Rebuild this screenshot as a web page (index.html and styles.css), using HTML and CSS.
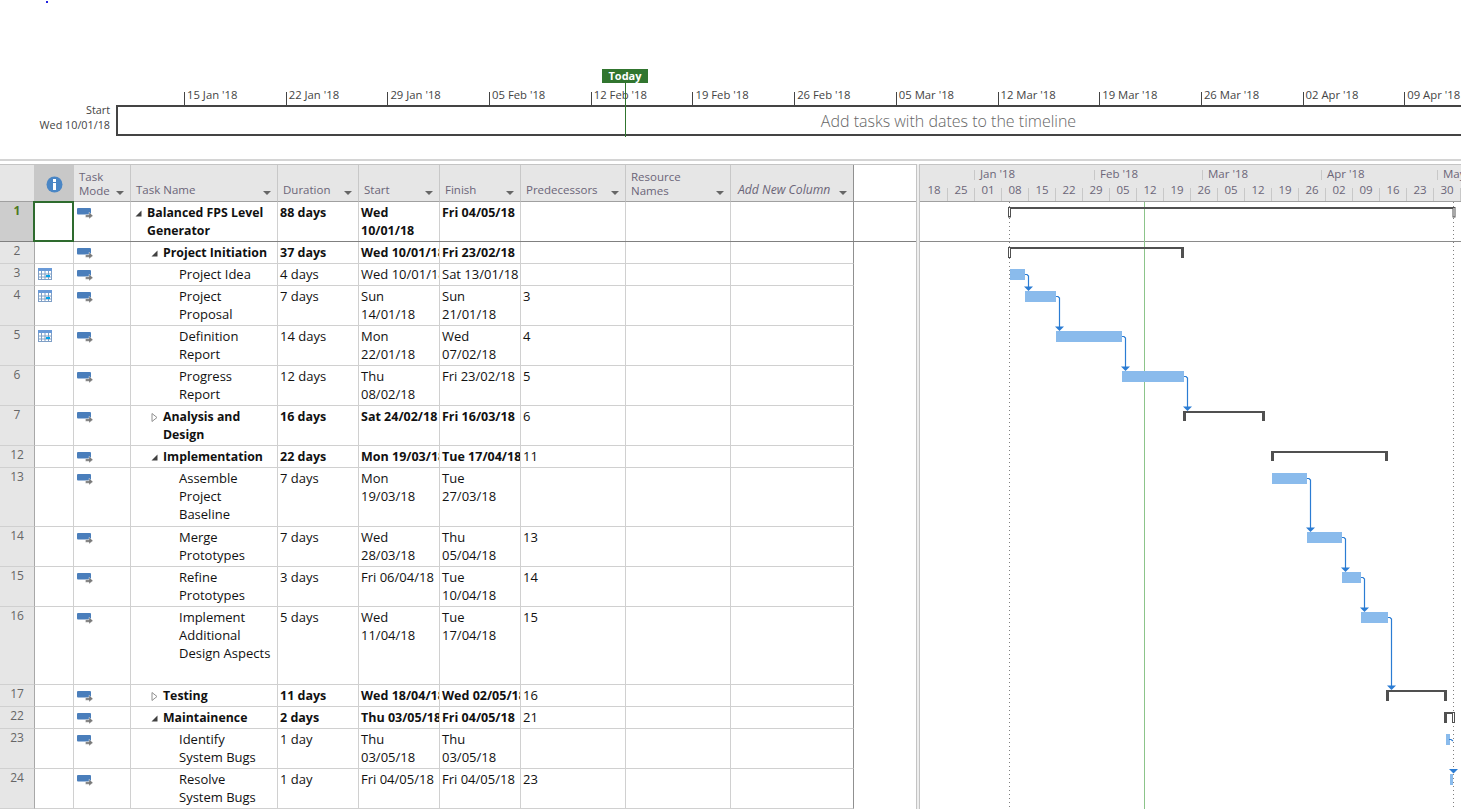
FILE: index.html
```html
<!DOCTYPE html>
<html>
<head>
  <meta charset="UTF-8" />
  <title>Balanced FPS Level Generator</title>
  <link rel="stylesheet" href="styles.css">
</head>
<body>
  <svg class="defs" width="0" height="0">
    <symbol id="mode" viewBox="0 0 16 11">
      <rect x="0" y="0" width="14" height="6.500" rx="1" fill="#4a7ebb"/>
      <path d="M8.500 6.800h3.500V4.200L16 7.700 12 11V9.200H8.500z" fill="#7a7a7a" stroke="#fff" stroke-width=".35"/>
    </symbol>
    <symbol id="cal" viewBox="0 0 14 12">
      <rect x=".5" y=".5" width="13" height="11" fill="#fff" stroke="#7f9fc6"/>
      <rect x="0" y="0" width="14" height="3" fill="#6a9ad8"/>
      <path d="M0 6h14M0 9h14M3.500 3v9M7 3v9M10.500 3v9" stroke="#7f9fc6"/>
      <rect x="8" y="7" width="4" height="2" fill="#00a2e8"/>
    </symbol>
    <symbol id="open" viewBox="0 0 7 7"><path d="M6.500 .5v6h-6z" fill="#404040"/></symbol>
    <symbol id="closed" viewBox="0 0 7 9"><path d="M1 .5l5 4-5 4z" fill="#fff" stroke="#909090"/></symbol>
  </svg>

  <div class="blue-mark"></div>

  <div class="timeline">
    <div class="today">Today</div>
    <div class="today-line"></div>
    <div class="tl-ticks">
      <div class="tick">15 Jan '18</div>
      <div class="tick">22 Jan '18</div>
      <div class="tick">29 Jan '18</div>
      <div class="tick">05 Feb '18</div>
      <div class="tick">12 Feb '18</div>
      <div class="tick">19 Feb '18</div>
      <div class="tick">26 Feb '18</div>
      <div class="tick">05 Mar '18</div>
      <div class="tick">12 Mar '18</div>
      <div class="tick">19 Mar '18</div>
      <div class="tick">26 Mar '18</div>
      <div class="tick">02 Apr '18</div>
      <div class="tick">09 Apr '18</div>
    </div>
    <div class="tl-row">
      <div class="tl-dates">Start<br>Wed 10/01/18</div>
      <div class="tl-box">Add tasks with dates to the timeline</div>
    </div>
  </div>

  <div class="view">
    <div class="sheet">
      <div class="row head">
        <div class="hc"></div>
        <div class="hc info-head"><svg width="17" height="17" viewBox="0 0 17 17"><circle cx="8.500" cy="8.500" r="8" fill="#4a86c5"/><rect x="7" y="3" width="3" height="3" fill="#fff"/><rect x="7" y="7" width="3" height="7" fill="#fff"/></svg></div>
        <div class="hc"><span class="two">Task<br>Mode</span><i class="drop"></i></div>
        <div class="hc"><span>Task Name</span><i class="drop"></i></div>
        <div class="hc"><span>Duration</span><i class="drop"></i></div>
        <div class="hc"><span>Start</span><i class="drop"></i></div>
        <div class="hc"><span>Finish</span><i class="drop"></i></div>
        <div class="hc"><span>Predecessors</span><i class="drop"></i></div>
        <div class="hc"><span class="two">Resource<br>Names</span><i class="drop"></i></div>
        <div class="hc add"><span>Add New Column</span><i class="drop"></i></div>
        <div class="hc blank"></div>
      </div>

      <div class="row h2 strong sel">
        <div class="num">1</div><div class="c selected"></div>
        <div class="c"><svg class="mode"><use href="#mode"/></svg></div>
        <div class="c name l0"><svg class="tg"><use href="#open"/></svg><span>Balanced FPS Level<br>Generator</span></div>
        <div class="c">88 days</div><div class="c">Wed<br>10/01/18</div><div class="c">Fri 04/05/18</div><div class="c"></div><div class="c"></div><div class="c end"></div><div class="c blank"></div>
      </div>
      <div class="row h1 strong">
        <div class="num">2</div><div class="c"></div>
        <div class="c"><svg class="mode"><use href="#mode"/></svg></div>
        <div class="c name l1"><svg class="tg"><use href="#open"/></svg><span>Project Initiation</span></div>
        <div class="c">37 days</div><div class="c">Wed 10/01/18</div><div class="c">Fri 23/02/18</div><div class="c"></div><div class="c"></div><div class="c end"></div>
      </div>
      <div class="row h1">
        <div class="num">3</div><div class="c"><svg class="cal"><use href="#cal"/></svg></div>
        <div class="c"><svg class="mode"><use href="#mode"/></svg></div>
        <div class="c name l2"><span>Project Idea</span></div>
        <div class="c">4 days</div><div class="c">Wed 10/01/18</div><div class="c">Sat 13/01/18</div><div class="c"></div><div class="c"></div><div class="c end"></div>
      </div>
      <div class="row h2">
        <div class="num">4</div><div class="c"><svg class="cal"><use href="#cal"/></svg></div>
        <div class="c"><svg class="mode"><use href="#mode"/></svg></div>
        <div class="c name l2"><span>Project<br>Proposal</span></div>
        <div class="c">7 days</div><div class="c">Sun<br>14/01/18</div><div class="c">Sun<br>21/01/18</div><div class="c">3</div><div class="c"></div><div class="c end"></div>
      </div>
      <div class="row h2">
        <div class="num">5</div><div class="c"><svg class="cal"><use href="#cal"/></svg></div>
        <div class="c"><svg class="mode"><use href="#mode"/></svg></div>
        <div class="c name l2"><span>Definition<br>Report</span></div>
        <div class="c">14 days</div><div class="c">Mon<br>22/01/18</div><div class="c">Wed<br>07/02/18</div><div class="c">4</div><div class="c"></div><div class="c end"></div>
      </div>
      <div class="row h2">
        <div class="num">6</div><div class="c"></div>
        <div class="c"><svg class="mode"><use href="#mode"/></svg></div>
        <div class="c name l2"><span>Progress<br>Report</span></div>
        <div class="c">12 days</div><div class="c">Thu<br>08/02/18</div><div class="c">Fri 23/02/18</div><div class="c">5</div><div class="c"></div><div class="c end"></div>
      </div>
      <div class="row h2 strong">
        <div class="num">7</div><div class="c"></div>
        <div class="c"><svg class="mode"><use href="#mode"/></svg></div>
        <div class="c name l1"><svg class="tg shut"><use href="#closed"/></svg><span>Analysis and<br>Design</span></div>
        <div class="c">16 days</div><div class="c">Sat 24/02/18</div><div class="c">Fri 16/03/18</div><div class="c plain">6</div><div class="c"></div><div class="c end"></div>
      </div>
      <div class="row h1 strong">
        <div class="num">12</div><div class="c"></div>
        <div class="c"><svg class="mode"><use href="#mode"/></svg></div>
        <div class="c name l1"><svg class="tg"><use href="#open"/></svg><span>Implementation</span></div>
        <div class="c">22 days</div><div class="c">Mon 19/03/18</div><div class="c">Tue 17/04/18</div><div class="c plain">11</div><div class="c"></div><div class="c end"></div>
      </div>
      <div class="row h3">
        <div class="num">13</div><div class="c"></div>
        <div class="c"><svg class="mode"><use href="#mode"/></svg></div>
        <div class="c name l2"><span>Assemble<br>Project<br>Baseline</span></div>
        <div class="c">7 days</div><div class="c">Mon<br>19/03/18</div><div class="c">Tue<br>27/03/18</div><div class="c"></div><div class="c"></div><div class="c end"></div>
      </div>
      <div class="row h2">
        <div class="num">14</div><div class="c"></div>
        <div class="c"><svg class="mode"><use href="#mode"/></svg></div>
        <div class="c name l2"><span>Merge<br>Prototypes</span></div>
        <div class="c">7 days</div><div class="c">Wed<br>28/03/18</div><div class="c">Thu<br>05/04/18</div><div class="c">13</div><div class="c"></div><div class="c end"></div>
      </div>
      <div class="row h2">
        <div class="num">15</div><div class="c"></div>
        <div class="c"><svg class="mode"><use href="#mode"/></svg></div>
        <div class="c name l2"><span>Refine<br>Prototypes</span></div>
        <div class="c">3 days</div><div class="c">Fri 06/04/18</div><div class="c">Tue<br>10/04/18</div><div class="c">14</div><div class="c"></div><div class="c end"></div>
      </div>
      <div class="row h4">
        <div class="num">16</div><div class="c"></div>
        <div class="c"><svg class="mode"><use href="#mode"/></svg></div>
        <div class="c name l2"><span>Implement<br>Additional<br>Design Aspects</span></div>
        <div class="c">5 days</div><div class="c">Wed<br>11/04/18</div><div class="c">Tue<br>17/04/18</div><div class="c">15</div><div class="c"></div><div class="c end"></div>
      </div>
      <div class="row h1 strong">
        <div class="num">17</div><div class="c"></div>
        <div class="c"><svg class="mode"><use href="#mode"/></svg></div>
        <div class="c name l1"><svg class="tg shut"><use href="#closed"/></svg><span>Testing</span></div>
        <div class="c">11 days</div><div class="c">Wed 18/04/18</div><div class="c">Wed 02/05/18</div><div class="c plain">16</div><div class="c"></div><div class="c end"></div>
      </div>
      <div class="row h1 strong">
        <div class="num">22</div><div class="c"></div>
        <div class="c"><svg class="mode"><use href="#mode"/></svg></div>
        <div class="c name l1"><svg class="tg"><use href="#open"/></svg><span>Maintainence</span></div>
        <div class="c">2 days</div><div class="c">Thu 03/05/18</div><div class="c">Fri 04/05/18</div><div class="c plain">21</div><div class="c"></div><div class="c end"></div>
      </div>
      <div class="row h2">
        <div class="num">23</div><div class="c"></div>
        <div class="c"><svg class="mode"><use href="#mode"/></svg></div>
        <div class="c name l2"><span>Identify<br>System Bugs</span></div>
        <div class="c">1 day</div><div class="c">Thu<br>03/05/18</div><div class="c">Thu<br>03/05/18</div><div class="c"></div><div class="c"></div><div class="c end"></div>
      </div>
      <div class="row h2">
        <div class="num">24</div><div class="c"></div>
        <div class="c"><svg class="mode"><use href="#mode"/></svg></div>
        <div class="c name l2"><span>Resolve<br>System Bugs</span></div>
        <div class="c">1 day</div><div class="c">Fri 04/05/18</div><div class="c">Fri 04/05/18</div><div class="c">23</div><div class="c"></div><div class="c end"></div>
      </div>
    </div>

    <div class="splitter"></div>

    <div class="gantt">
      <div class="g-head">
        <div class="months">
          <div class="month lead"></div>
          <div class="month jan">Jan '18</div>
          <div class="month feb">Feb '18</div>
          <div class="month mar">Mar '18</div>
          <div class="month apr">Apr '18</div>
          <div class="month may">May '18</div>
        </div>
        <div class="days">
          <div>18</div><div>25</div><div>01</div><div>08</div><div>15</div><div>22</div><div>29</div>
          <div>05</div><div>12</div><div>19</div><div>26</div><div>05</div><div>12</div><div>19</div>
          <div>26</div><div>02</div><div>09</div><div>16</div><div>23</div><div>30</div>
        </div>
      </div>
      <!-- drawn in page coordinates -->
      <svg class="g-chart" viewBox="920 202 541 607" width="541" height="607">
        <path d="M920 241.500h541" stroke="#8a8a8a"/>
        <path d="M1009.500 202V809M1453.500 202V809" stroke="#808080" stroke-dasharray="1 3"/>
        <path d="M1144.500 202V809" stroke="#8cc48a"/>

        <g fill="#505050">
          <rect x="1010" y="207" width="444" height="2"/>
          <rect x="1010" y="247" width="174" height="2"/>
          <rect x="1181" y="247" width="3" height="11"/>
          <rect x="1183" y="411" width="82" height="2"/>
          <rect x="1183" y="411" width="3" height="10"/>
          <rect x="1262" y="411" width="3" height="10"/>
          <rect x="1271" y="451" width="117" height="2"/>
          <rect x="1271" y="451" width="3" height="10"/>
          <rect x="1385" y="451" width="3" height="10"/>
          <rect x="1386" y="690" width="61" height="2"/>
          <rect x="1386" y="690" width="3" height="11"/>
          <rect x="1444" y="690" width="3" height="11"/>
          <rect x="1444" y="712" width="9" height="2"/>
          <rect x="1444" y="712" width="3" height="11"/>
        </g>
        <g fill="#fff" stroke="#505050">
          <rect x="1008.500" y="207.500" width="2" height="9.500"/>
          <rect x="1008.500" y="247.500" width="2" height="10"/>
          <rect x="1453" y="207.500" width="2" height="9.500"/>
          <rect x="1452.500" y="712.500" width="2" height="10"/>
        </g>

        <g fill="#8abbec">
          <rect x="1010" y="269" width="15" height="11"/>
          <rect x="1025" y="291" width="31" height="11"/>
          <rect x="1056" y="331" width="66" height="11"/>
          <rect x="1122" y="371" width="62" height="11"/>
          <rect x="1272" y="473" width="35" height="11"/>
          <rect x="1307" y="532" width="35" height="11"/>
          <rect x="1342" y="572" width="19" height="11"/>
          <rect x="1361" y="612" width="27" height="11"/>
          <rect x="1446" y="734" width="4" height="11"/>
          <rect x="1450" y="774" width="3" height="11"/>
        </g>

        <g fill="none" stroke="#2b7cd3" stroke-width="1.200">
          <path d="M1025 274.500h2l1.500 1.500V288"/>
          <path d="M1056 296.500h2l1.500 1.500V328"/>
          <path d="M1122 336.500h2l1.500 1.500V368"/>
          <path d="M1184 376.500h2l1.500 1.500V408"/>
          <path d="M1307 478.500h2l1.500 1.500V529"/>
          <path d="M1342 537.500h2l1.500 1.500V569"/>
          <path d="M1361 577.500h2l1.500 1.500V609"/>
          <path d="M1388 617.500h2l1.500 1.500V687"/>
          <path d="M1449 739.500h2l2 1.500"/>
        </g>
        <g fill="#2b7cd3">
          <path d="M1024 286.500h9l-4.500 4.500z"/>
          <path d="M1055 326.500h9l-4.500 4.500z"/>
          <path d="M1121 366.500h9l-4.500 4.500z"/>
          <path d="M1183 406.500h9l-4.500 4.500z"/>
          <path d="M1306 527.500h9l-4.500 4.500z"/>
          <path d="M1341 567.500h9l-4.500 4.500z"/>
          <path d="M1360 607.500h9l-4.500 4.500z"/>
          <path d="M1387 685.500h9l-4.500 4.500z"/>
          <path d="M1449 769h9l-4.500 4.500z"/>
        </g>
      </svg>
    </div>
  </div>
</body>
</html>
```

FILE: styles.css
```css
html, body {
  margin: 0;
  height: 809px;
  overflow: hidden;
  background: #fff;
}
body {
  position: relative;
  font-family: "Open Sans", "Noto Sans", Arial, sans-serif;
  font-size: 13px;
  color: #111;
}
.defs {
  position: absolute;
}
.blue-mark {
  position: absolute;
  left: 46px;
  top: 1px;
  width: 2px;
  height: 2px;
  background: #2222e0;
}

/* timeline */
.timeline {
  position: relative;
  height: 69px;
  padding-top: 90px;
  margin-bottom: 3px;
  border-bottom: 2px solid #d4d4d4;
}
.today {
  position: absolute;
  left: 602px;
  top: 69px;
  width: 46px;
  height: 14px;
  line-height: 14px;
  background: #31752f;
  color: #fff;
  font-size: 11px;
  font-weight: 700;
  text-align: center;
}
.today-line {
  position: absolute;
  left: 625px;
  top: 83px;
  width: 1px;
  height: 54px;
  background: #31752f;
}
.tl-ticks {
  display: flex;
  margin-left: 184px;
  height: 15px;
}
.tick {
  flex: 0 0 101.700px;
  box-sizing: border-box;
  padding-left: 3px;
  background: linear-gradient(#444, #444) no-repeat left bottom / 1px 13px;
  font-size: 11.300px;
  line-height: 10px;
  color: #444;
  white-space: nowrap;
}
.tl-row {
  display: flex;
}
.tl-dates {
  width: 110px;
  margin-right: 6px;
  margin-top: -3px;
  text-align: right;
  font-size: 10.800px;
  line-height: 15px;
  color: #444;
}
.tl-box {
  flex: 1;
  height: 27px;
  padding-left: 318px;
  border: 2px solid #444;
  border-right: none;
  text-align: center;
  font-size: 16px;
  font-weight: 300;
  line-height: 29px;
  color: #666;
}

/* sheet */
.view {
  display: flex;
  height: 645px;
}
.sheet {
  flex: 0 0 916px;
}
.row {
  display: grid;
  grid-template-columns: 35px 39px 57px 147px 81px 81px 81px 105px 105px 123px 62px;
  box-sizing: border-box;
}
.h1 { height: 22px; }
.h2 { height: 40px; }
.h3 { height: 59px; }
.h4 { height: 78px; }

.head {
  height: 38px;
  border-top: 1px solid #c4c4c4;
}
.hc {
  display: flex;
  align-items: flex-end;
  justify-content: space-between;
  box-sizing: border-box;
  padding: 0 6px 4px 5px;
  background: #e6e6e6;
  border-right: 1px solid #c8c8c8;
  border-bottom: 1px solid #a0a0a0;
  font-size: 11.500px;
  line-height: 15px;
  color: #6b6578;
}
.two {
  line-height: 14px;
  margin-bottom: -1px;
}
.info-head {
  align-items: center;
  justify-content: center;
  padding: 2px 0 0;
  background: #c8c8c8;
}
.hc.add {
  padding-left: 7px;
  font-size: 12.200px;
  font-style: italic;
  border-right-color: #909090;
}
.hc.blank {
  background: #fff;
  border-right: none;
}
.drop {
  flex: none;
  width: 0;
  height: 0;
  margin: 0 0 2px 4px;
  border-left: 4px solid transparent;
  border-right: 4px solid transparent;
  border-top: 4px solid #666;
}

.c {
  box-sizing: border-box;
  padding: 1px 0 0 2px;
  border-right: 1px solid #d0d0d0;
  border-bottom: 1px solid #d0d0d0;
  line-height: 18px;
  white-space: nowrap;
  overflow: hidden;
}
.c.end {
  border-right-color: #909090;
}
.c.blank {
  border-right: none;
}
.num {
  box-sizing: border-box;
  background: #e6e6e6;
  border-right: 1px solid #a8a8a8;
  border-bottom: 1px solid #d0d0d0;
  text-align: center;
  font-size: 12px;
  line-height: 18px;
  color: #666;
}
.strong .c {
  padding-top: 2px;
  font-size: 12.500px;
  font-weight: 700;
}
.strong .c.name {
  font-size: 12.300px;
}
.strong .c.plain {
  padding-top: 1px;
  font-size: 13px;
  font-weight: 400;
}
.sel {
  border-bottom: 1px solid #808080;
}
.sel .c,
.sel .num {
  border-bottom: none;
}
.sel .num {
  background: #cdcdcd;
  color: #4d7a1f;
  font-weight: 700;
}
.c.selected {
  position: relative;
  z-index: 1;
  margin: 0 1px 0 -1px;
  overflow: visible;
  outline: 2px solid #2e6b2e;
  outline-offset: -1px;
}
.name {
  display: flex;
  align-items: flex-start;
}
.l0 { padding-left: 4px; }
.l1 { padding-left: 20px; }
.l2 { padding-left: 48px; }
.tg {
  flex: none;
  width: 7px;
  height: 7px;
  margin: 6px 5px 0 0;
}
.tg.shut {
  height: 9px;
  margin-top: 5px;
}
.mode {
  display: block;
  width: 16px;
  height: 11px;
  margin: 5px 0 0 1px;
}
.strong .mode {
  margin-top: 4px;
}
.cal {
  display: block;
  width: 14px;
  height: 12px;
  margin: 3px 0 0 1px;
}

.splitter {
  flex: 0 0 4px;
  box-sizing: border-box;
  background: #eeeeee;
  border-left: 1px solid #c4c4c4;
  border-right: 1px solid #c4c4c4;
}

/* gantt */
.gantt {
  flex: 1;
  min-width: 0;
  overflow: hidden;
}
.g-head {
  height: 38px;
  box-sizing: border-box;
  background: #e6e6e6;
  border-top: 1px solid #c4c4c4;
  border-bottom: 1px solid #a0a0a0;
  font-size: 11.500px;
  color: #6b6578;
  overflow: hidden;
}
.months {
  display: flex;
  height: 15px;
  margin-left: 1px;
  padding-top: 2px;
  line-height: 14px;
}
.month {
  flex: none;
  box-sizing: border-box;
  padding-left: 6px;
  background: linear-gradient(#c8c8c8, #c8c8c8) no-repeat left 3px / 1px 10px;
  white-space: nowrap;
}
.lead { width: 53px; background: none; }
.jan { width: 120px; }
.feb { width: 108px; }
.mar { width: 119px; }
.apr { width: 116px; }
.may { width: 44px; }
.days {
  display: flex;
  height: 19px;
  margin-left: 1px;
  line-height: 16px;
}
.days div {
  flex: 0 0 27px;
  box-sizing: border-box;
  padding-right: 1px;
  background: linear-gradient(#c8c8c8, #c8c8c8) no-repeat right bottom / 1px 13px;
  text-align: center;
}
.g-chart {
  display: block;
}
```
